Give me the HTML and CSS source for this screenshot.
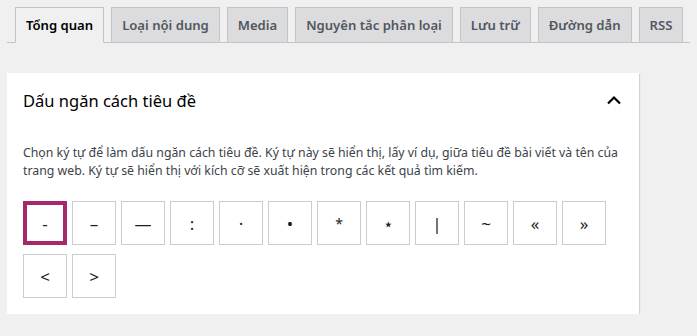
FILE: index.html
```html
<!DOCTYPE html>
<html lang="vi">
<head>
<meta charset="utf-8">
<title>Tổng quan</title>
<link rel="stylesheet" href="styles.css">
</head>
<body>
<nav class="tabs">
  <a class="tab tab-active">Tổng quan</a>
  <a class="tab">Loại nội dung</a>
  <a class="tab">Media</a>
  <a class="tab">Nguyên tắc phân loại</a>
  <a class="tab">Lưu trữ</a>
  <a class="tab">Đường dẫn</a>
  <a class="tab">RSS</a>
</nav>
<section class="panel">
  <header class="panel-head">
    <h2 class="panel-title">Dấu ngăn cách tiêu đề</h2>
    <button class="toggle" aria-label="Thu gọn">
      <svg width="16" height="10" viewBox="0 0 16 10"><path d="M2 8.5 L8 2.5 L14 8.5" fill="none" stroke="#000" stroke-width="2.2"/></svg>
    </button>
  </header>
  <p class="desc">Chọn ký tự để làm dấu ngăn cách tiêu đề. Ký tự này sẽ hiển thị, lấy ví dụ, giữa tiêu đề bài viết và tên của trang web. Ký tự sẽ hiển thị với kích cỡ sẽ xuất hiện trong các kết quả tìm kiếm.</p>
  <div class="seps">
    <span class="sep sep-on">-</span>
    <span class="sep">–</span>
    <span class="sep">—</span>
    <span class="sep">:</span>
    <span class="sep">·</span>
    <span class="sep">•</span>
    <span class="sep sep-small">*</span>
    <span class="sep">⋆</span>
    <span class="sep">|</span>
    <span class="sep">~</span>
    <span class="sep">«</span>
    <span class="sep">»</span>
    <span class="sep">&lt;</span>
    <span class="sep">&gt;</span>
  </div>
</section>
</body>
</html>
```
FILE: styles.css
```css
html, body {
  margin: 0;
  padding: 0;
}
body {
  background: #f0f0f1;
  font-family: "Noto Sans", "Open Sans", sans-serif;
  color: #1d2327;
}
.tabs {
  display: flex;
  margin: 7px 7px 0 7px;
  padding-left: 1px;
  border-bottom: 1px solid #c3c4c7;
}
.tab {
  display: block;
  margin-left: 7px;
  margin-bottom: -1px;
  padding: 5px 10px;
  border: 1px solid #c3c4c7;
  background: #dcdcde;
  color: #50575e;
  font-size: 13.1px;
  font-weight: 600;
  line-height: 24px;
  white-space: nowrap;
}
.tab-active {
  background: #f0f0f1;
  border-bottom-color: #f0f0f1;
  color: #000;
}
.panel {
  margin: 30px 0 0 7px;
  width: 632px;
  background: #fff;
  box-shadow: 1px 1px 1px rgba(0,0,0,0.12);
  padding: 0 16px 16px;
  box-sizing: border-box;
}
.panel-head {
  display: flex;
  align-items: center;
  justify-content: space-between;
  height: 54px;
}
.panel-title {
  margin: 0;
  font-size: 16.5px;
  font-weight: 400;
  color: #000;
}
.toggle {
  border: 0;
  background: none;
  padding: 0;
  margin-right: 1px;
  display: flex;
  width: 16px;
  height: 10px;
}
.desc {
  margin: 17px 0 0;
  font-size: 12.3px;
  line-height: 17.5px;
  color: #3c434a;
}
.seps {
  display: flex;
  flex-wrap: wrap;
  column-gap: 5px;
  row-gap: 9px;
  margin-top: 22px;
}
.sep {
  box-sizing: border-box;
  width: 44px;
  height: 44px;
  border: 1px solid #cccccc;
  display: flex;
  align-items: center;
  justify-content: center;
  font-size: 17px;
  color: #1e1e1e;
}
.sep-small {
  font-size: 14px;
}
.sep-on {
  border: 4px solid #a4286a;
}
```
